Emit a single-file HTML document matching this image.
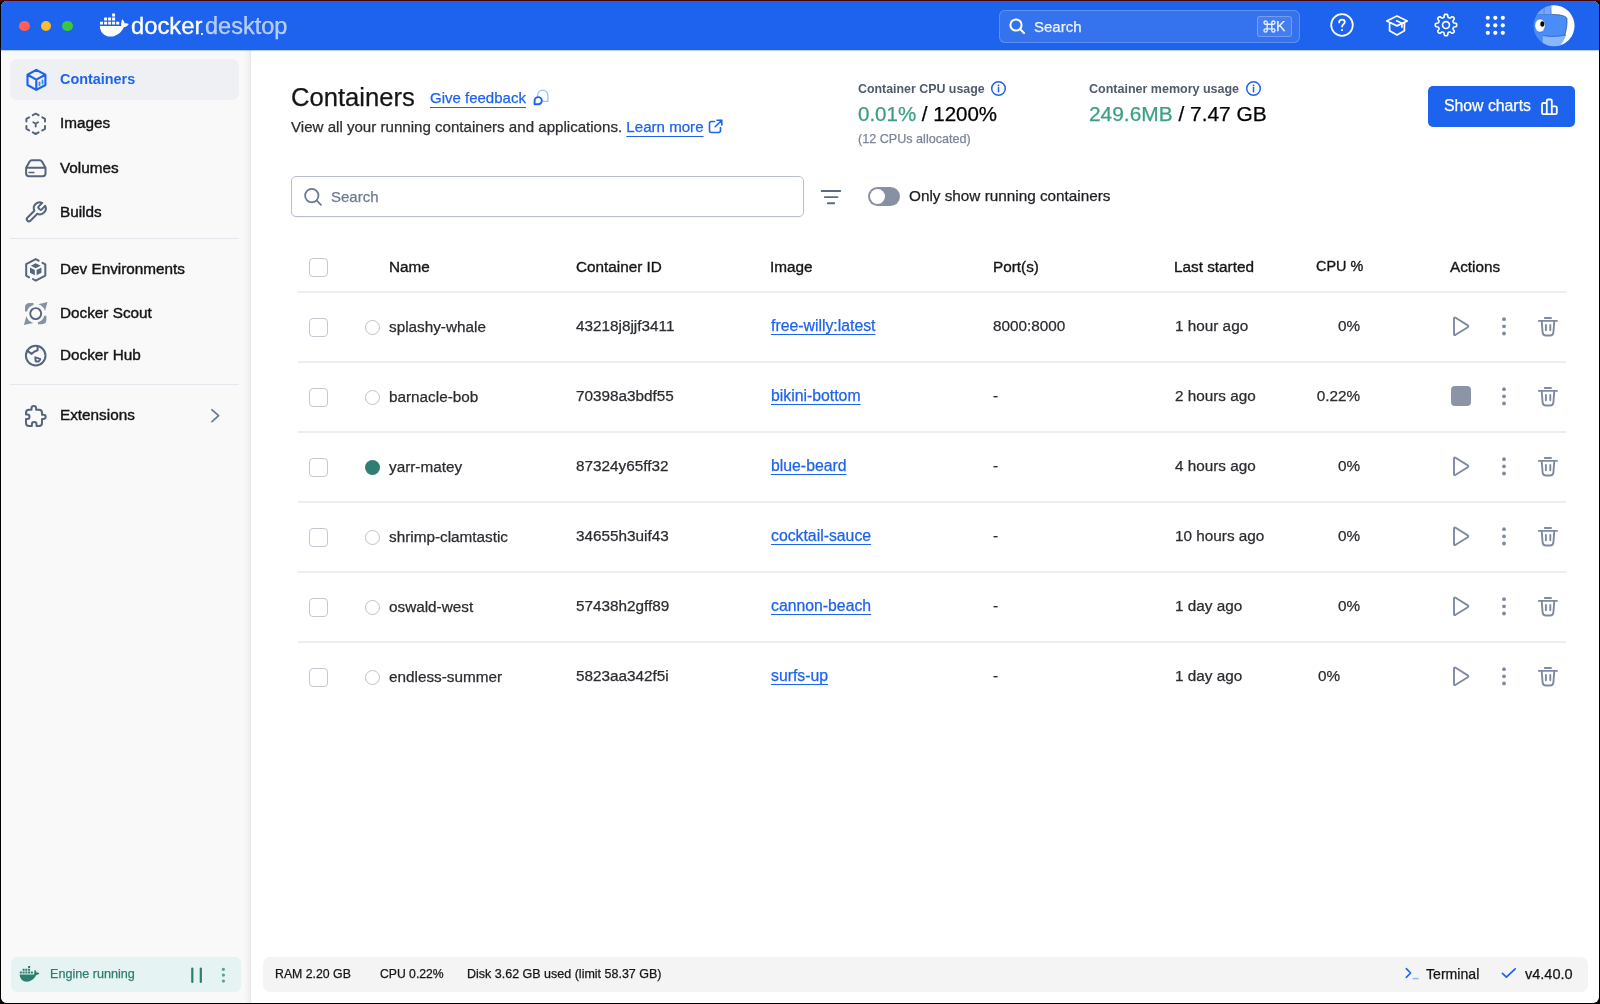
<!DOCTYPE html>
<html><head><meta charset="utf-8">
<style>
*{box-sizing:border-box;margin:0;padding:0}
html,body{width:1600px;height:1004px;overflow:hidden;background:#000;font-family:"Liberation Sans",sans-serif;position:relative;-webkit-text-stroke-width:0.25px}
#win{position:absolute;left:1px;top:1px;width:1598px;height:1002px;background:#fff;border-radius:6px;overflow:hidden}
.a{position:absolute;white-space:nowrap;will-change:transform}
svg.a{overflow:visible}
#hdr{position:absolute;left:1px;top:1px;width:1598px;height:49px;background:#1d63ed;border-radius:6px 6px 0 0}
#side{position:absolute;left:1px;top:50px;width:250px;height:953px;background:#f9f9f9;border-bottom-left-radius:6px}
#sideedge{position:absolute;left:244px;top:50px;width:7px;height:953px;background:linear-gradient(to right,rgba(0,0,0,0),rgba(0,0,0,0.035) 70%,rgba(0,0,0,0.075))}
.nav{font-size:15.3px;line-height:15px;color:#131417;-webkit-text-stroke-width:0.4px}
.tl{position:absolute;width:10.5px;height:10.5px;border-radius:50%}
.hd{font-size:15.3px;line-height:15px;color:#141518;-webkit-text-stroke-width:0.35px}
.cell{font-size:15.3px;line-height:15px;color:#2a2c30}
.lnk2{font-size:15.8px;line-height:15px;color:#1d63ed;text-decoration:underline;text-underline-offset:3px;text-decoration-thickness:1px;text-decoration-skip-ink:none}
.lnk{font-size:15px;line-height:15px;color:#1d63ed;text-decoration:underline;text-underline-offset:3.5px;text-decoration-thickness:1px;text-decoration-skip-ink:none}
.rowline{position:absolute;left:298px;width:1268px;height:2px;margin-top:-1px;background:#eceef1}
.cb{position:absolute;left:309px;width:19px;height:19px;border:1.5px solid #c3c8d3;border-radius:4px;background:#fff}
.st{position:absolute;left:365px;width:15px;height:15px;border:1.3px solid #c2c2c2;border-radius:50%}
</style></head><body>
<div id="win"></div>
<div id="hdr"></div>
<div id="side"></div>
<div id="sideedge"></div>
<div class="a" style="left:1px;top:50px;width:1598px;height:1px;background:rgba(29,99,237,0.3)"></div>
<div class="a" style="left:0;top:0;width:1600px;height:1px;background:#4a0606"></div>

<!-- traffic lights -->
<div class="tl" style="left:19px;top:20.5px;background:#fe5f57"></div>
<div class="tl" style="left:40.5px;top:20.5px;background:#febc2e"></div>
<div class="tl" style="left:62px;top:20.5px;background:#3ac83f"></div>


<!-- logo -->
<svg class="a" style="left:0;top:0" width="300" height="50" viewBox="0 0 300 50">
 <g fill="#fff">
  <rect x="112.1" y="13.6" width="3" height="3" rx="0.3"/>
  <rect x="104.1" y="17.6" width="3" height="2.9" rx="0.3"/>
  <rect x="108.1" y="17.6" width="3" height="2.9" rx="0.3"/>
  <rect x="112.1" y="17.6" width="3" height="2.9" rx="0.3"/>
  <rect x="100" y="21.7" width="3" height="2.9" rx="0.3"/>
  <rect x="104.1" y="21.7" width="3" height="2.9" rx="0.3"/>
  <rect x="108.1" y="21.7" width="3" height="2.9" rx="0.3"/>
  <rect x="112.1" y="21.7" width="3" height="2.9" rx="0.3"/>
  <rect x="116.2" y="21.7" width="3" height="2.9" rx="0.3"/>
  <path d="M99.9 26 L121.3 26 C121 24.5 121.2 21 122.3 19.3 C123.5 20.5 124.5 22 124.6 23.5 C126 23 127.5 23.3 128.8 24 C127.8 26 125.5 27.2 123.8 27.3 C121.5 33 116 36.6 110.5 36.6 C104 36.6 99.9 32 99.9 26 Z"/>
 </g>
</svg>
<div class="a" style="left:131px;top:13.6px;font-size:23.8px;line-height:23px;color:#fff;-webkit-text-stroke:0.35px #fff">docker</div>
<div class="a" style="left:200.5px;top:32.5px;width:1.5px;height:1.5px;background:#fff;border-radius:50%"></div>
<div class="a" style="left:205px;top:14.7px;font-size:23.5px;line-height:23px;color:rgba(255,255,255,0.66)">desktop</div>

<!-- header search -->
<div class="a" style="left:998.5px;top:9.5px;width:301px;height:33px;border:1px solid rgba(255,255,255,0.22);background:rgba(255,255,255,0.1);border-radius:6px"></div>
<svg class="a" style="left:1008px;top:17px" width="18" height="18" viewBox="0 0 18 18"><circle cx="8" cy="8" r="5.6" fill="none" stroke="#fff" stroke-width="2"/><path d="M12.2 12.2 L16 16" stroke="#fff" stroke-width="2" stroke-linecap="round"/></svg>
<div class="a" style="left:1034px;top:19.3px;font-size:15px;line-height:15px;color:rgba(255,255,255,0.9)">Search</div>
<div class="a" style="left:1257px;top:16px;width:35px;height:21px;border:1px solid rgba(255,255,255,0.25);background:rgba(255,255,255,0.08);border-radius:3px"></div>
<svg class="a" style="left:1263.2px;top:19.6px" width="13" height="13" viewBox="0 0 13 13"><path d="M4.2 4.2 H8.8 V8.8 H4.2 Z M4.2 4.2 V2.6 A1.6 1.6 0 1 0 2.6 4.2 H4.2 M8.8 4.2 V2.6 A1.6 1.6 0 1 1 10.4 4.2 H8.8 M8.8 8.8 V10.4 A1.6 1.6 0 1 0 10.4 8.8 H8.8 M4.2 8.8 V10.4 A1.6 1.6 0 1 1 2.6 8.8 H4.2" fill="none" stroke="rgba(255,255,255,0.88)" stroke-width="1.35"/></svg>
<div class="a" style="left:1275.6px;top:19.4px;font-size:14px;line-height:14px;color:rgba(255,255,255,0.88)">K</div>

<!-- header icons -->
<svg class="a" style="left:1329.7px;top:13.25px" width="24" height="24" viewBox="0 0 24 24"><circle cx="12" cy="12" r="10.8" fill="none" stroke="#fff" stroke-width="1.75"/><path d="M9.2 9.4 C9.2 7.7 10.5 6.7 12 6.7 C13.6 6.7 14.8 7.7 14.8 9.2 C14.8 11.1 12.1 11.3 12.1 13.6" fill="none" stroke="#fff" stroke-width="1.8" stroke-linecap="round"/><circle cx="12.05" cy="17" r="1.1" fill="#fff"/></svg>
<svg class="a" style="left:1384px;top:13.7px" width="26" height="24" viewBox="0 0 26 24"><g transform="translate(13 11.5) scale(0.95) translate(-13 -11.6)"><path d="M2.2 6.8 L13 1.6 L23.8 6.8 L13 12 Z M5.2 8.3 V17.2 L13 21.6 L20.8 17.2 V8.3" fill="none" stroke="#fff" stroke-width="1.8" stroke-linejoin="round"/><path d="M12.6 6.6 L18.2 9.2 V13.5" fill="none" stroke="#fff" stroke-width="1.7" stroke-linecap="round"/></g></svg>
<svg class="a" style="left:1434.25px;top:13.3px" width="24" height="24" viewBox="0 0 24 24"><path d="M22.70 12.00 L22.68 12.42 L22.62 12.84 L22.45 13.24 L22.00 13.58 L21.07 13.80 L20.14 13.95 L19.67 14.16 L19.46 14.42 L19.33 14.70 L19.21 14.98 L19.09 15.27 L18.99 15.56 L18.96 15.90 L19.14 16.37 L19.69 17.14 L20.19 17.95 L20.27 18.52 L20.10 18.92 L19.85 19.26 L19.57 19.57 L19.26 19.85 L18.92 20.10 L18.52 20.27 L17.95 20.19 L17.14 19.69 L16.37 19.14 L15.90 18.96 L15.56 18.99 L15.27 19.09 L14.98 19.21 L14.70 19.33 L14.42 19.46 L14.16 19.67 L13.95 20.14 L13.80 21.07 L13.58 22.00 L13.24 22.45 L12.84 22.62 L12.42 22.68 L12.00 22.70 L11.58 22.68 L11.16 22.62 L10.76 22.45 L10.42 22.00 L10.20 21.07 L10.05 20.14 L9.84 19.67 L9.58 19.46 L9.30 19.33 L9.02 19.21 L8.73 19.09 L8.44 18.99 L8.10 18.96 L7.63 19.14 L6.86 19.69 L6.05 20.19 L5.48 20.27 L5.08 20.10 L4.74 19.85 L4.43 19.57 L4.15 19.26 L3.90 18.92 L3.73 18.52 L3.81 17.95 L4.31 17.14 L4.86 16.37 L5.04 15.90 L5.01 15.56 L4.91 15.27 L4.79 14.98 L4.67 14.70 L4.54 14.42 L4.33 14.16 L3.86 13.95 L2.93 13.80 L2.00 13.58 L1.55 13.24 L1.38 12.84 L1.32 12.42 L1.30 12.00 L1.32 11.58 L1.38 11.16 L1.55 10.76 L2.00 10.42 L2.93 10.20 L3.86 10.05 L4.33 9.84 L4.54 9.58 L4.67 9.30 L4.79 9.02 L4.91 8.73 L5.01 8.44 L5.04 8.10 L4.86 7.63 L4.31 6.86 L3.81 6.05 L3.73 5.48 L3.90 5.08 L4.15 4.74 L4.43 4.43 L4.74 4.15 L5.08 3.90 L5.48 3.73 L6.05 3.81 L6.86 4.31 L7.63 4.86 L8.10 5.04 L8.44 5.01 L8.73 4.91 L9.02 4.79 L9.30 4.67 L9.58 4.54 L9.84 4.33 L10.05 3.86 L10.20 2.93 L10.42 2.00 L10.76 1.55 L11.16 1.38 L11.58 1.32 L12.00 1.30 L12.42 1.32 L12.84 1.38 L13.24 1.55 L13.58 2.00 L13.80 2.93 L13.95 3.86 L14.16 4.33 L14.42 4.54 L14.70 4.67 L14.98 4.79 L15.27 4.91 L15.56 5.01 L15.90 5.04 L16.37 4.86 L17.14 4.31 L17.95 3.81 L18.52 3.73 L18.92 3.90 L19.26 4.15 L19.57 4.43 L19.85 4.74 L20.10 5.08 L20.27 5.48 L20.19 6.05 L19.69 6.86 L19.14 7.63 L18.96 8.10 L18.99 8.44 L19.09 8.73 L19.21 9.02 L19.33 9.30 L19.46 9.58 L19.67 9.84 L20.14 10.05 L21.07 10.20 L22.00 10.42 L22.45 10.76 L22.62 11.16 L22.68 11.58 Z" fill="none" stroke="#fff" stroke-width="1.65" stroke-linejoin="round"/><circle cx="12" cy="12" r="3.45" fill="none" stroke="#fff" stroke-width="1.65"/></svg>
<svg class="a" style="left:1484px;top:14px" width="24" height="24" viewBox="0 0 24 24"><g fill="#fff"><circle cx="3.8" cy="3.8" r="2.1"/><circle cx="11.3" cy="3.8" r="2.1"/><circle cx="18.8" cy="3.8" r="2.1"/><circle cx="3.8" cy="11.3" r="2.1"/><circle cx="11.3" cy="11.3" r="2.1"/><circle cx="18.8" cy="11.3" r="2.1"/><circle cx="3.8" cy="18.8" r="2.1"/><circle cx="11.3" cy="18.8" r="2.1"/><circle cx="18.8" cy="18.8" r="2.1"/></g></svg>
<!-- avatar -->
<svg class="a" style="left:1533px;top:5px" width="42" height="42" viewBox="0 0 42 42">
 <defs><clipPath id="avc"><circle cx="21" cy="20.8" r="20.5"/></clipPath></defs>
 <g clip-path="url(#avc)">
  <rect x="0" y="0" width="42" height="42" fill="#4a8df8"/>
  <path d="M0 0 H18 L18.5 9.5 H0 Z" fill="#7aa6f6"/>
  <path d="M17.5 0 H42 V42 H25 C30.5 36 34.5 26 34 13.5 C33.2 11 28 9.5 18.5 9.5 Z" fill="#fff"/>
  <path d="M11 9.5 V2 M18 9.5 V0" stroke="#3f79dc" stroke-width="0.7"/>
  <path d="M18.5 9.5 C28 9.5 33.2 11 34 13.5 C34.5 26 30.5 36 25 42" fill="none" stroke="#23508f" stroke-width="0.7"/>
  <path d="M0 9.5 H18.5" stroke="#3f79dc" stroke-width="0.7"/>
  <path d="M10 30.5 C18 32 26 31.5 33 30 C31.5 35 29 39 25.5 42 H9.5 Z" fill="#8ab6fb"/>
  <path d="M10 30.5 C18 32 26 31.5 33 30" fill="none" stroke="#2a5fc0" stroke-width="0.8"/>
  <ellipse cx="7" cy="20.5" rx="5.2" ry="6.6" fill="#fff" stroke="#2a5fc0" stroke-width="0.5"/>
  <ellipse cx="9.3" cy="19" rx="2" ry="2.8" fill="#000"/>
 </g>
</svg>

<!-- sidebar -->
<div class="a" style="left:10px;top:59px;width:229px;height:41px;background:#eef0f4;border-radius:7px"></div>
<div class="a" style="left:10px;top:238px;width:229px;height:1px;background:#e4e7ec"></div>
<div class="a" style="left:10px;top:384px;width:229px;height:1px;background:#e4e7ec"></div>
<svg class="a" style="left:0;top:0" width="250" height="440" viewBox="0 0 250 440">
 <g fill="none" stroke="#1d63ed" stroke-width="2" stroke-linejoin="round" stroke-linecap="round">
  <path transform="translate(0.6 0.3)" d="M35.7 69.6 L44.8 74.5 L44.8 84.7 L35.7 89.6 L26.9 84.7 L26.9 74.5 Z M26.9 74.5 L35.7 79.3 L44.8 74.5 M35.7 79.3 V89.6" stroke-width="2.15"/>
 </g>
 <g stroke="#2f94f5" stroke-width="1.8" stroke-linecap="round"><path transform="translate(0.6 0.3)" d="M38.9 82 V85 M41.9 80.2 V83.2"/></g>
 <g fill="none" stroke="#56657e" stroke-width="2" stroke-linejoin="round" stroke-linecap="round">
  <!-- images dashed hex -->
  <path d="M32.8 115.2 L35.7 113.7 L38.6 115.2 M42.3 117.3 L45 118.9 L45 121.6 M45 126 L45 128.8 L42.3 130.4 M38.6 132.4 L35.7 134 L32.8 132.4 M29.1 130.4 L26.4 128.8 L26.4 126 M26.4 121.6 L26.4 118.9 L29.1 117.3"/>
  <path d="M33.3 122.3 L35.7 123.7 L38.1 122.3 M35.7 123.7 V126.5" stroke-width="1.9"/>
  <!-- volumes -->
  <path d="M26.1 167.8 L29.5 161.7 Q30.3 160.3 31.9 160.3 L39.7 160.3 Q41.3 160.3 42.1 161.7 L45.5 167.8 L45.5 173.3 Q45.5 176.2 42.6 176.2 L29 176.2 Q26.1 176.2 26.1 173.3 Z M26.1 167.8 H45.5"/>
  <path d="M29.2 172.5 H33.8" stroke-width="1.7"/>
  <!-- wrench -->
  <path transform="translate(23.8 200.3) scale(1.0)" d="M14.7 6.3a1 1 0 0 0 0 1.4l1.6 1.6a1 1 0 0 0 1.4 0l3.77-3.77a6 6 0 0 1-7.94 7.94l-6.91 6.91a2.12 2.12 0 0 1-3-3l6.91-6.91a6 6 0 0 1 7.94-7.94l-3.76 3.76z"/>
  <!-- dev env -->
  <path d="M29.1 277.3 L26.2 275.7 L26.2 264.2 L35.7 259.1 L38.6 260.7 M42.5 262.8 L45.3 264.3 L45.3 275.6 L35.7 280.6 L32.9 279"/>
  <!-- hub -->
  <circle cx="35.7" cy="355.6" r="9.8"/>
  <path d="M27.2 350.6 L31.6 353.9 C33.5 351.8 35.5 350.8 37.6 350.3 L37.6 346.2"/>
  <path d="M35.3 357.3 L40 358.8 Q40.5 359.1 40.1 359.6 L38.7 361.5 L36.2 361.5 Q35.7 361.5 35.6 361 Z" stroke-width="1.9"/>
  <!-- extensions -->
  <path d="M26 412.8 Q26 409.8 29 409.8 L31.5 409.8 L31.5 408.3 A2.3 2.3 0 0 1 36.1 408.3 L36.1 409.8 L39 409.8 Q42 409.8 42 412.8 L42 414.7 L43.6 414.7 A2.1 2.1 0 0 1 43.6 418.9 L42 418.9 L42 423 Q42 426 39 426 L36.5 426 L36.5 424.3 A2.3 2.3 0 0 0 31.9 424.3 L31.9 426 L29 426 Q26 426 26 423 L26 419 L27.3 419 A2.2 2.2 0 0 0 27.3 414.6 L26 414.6 Z"/>
  <path d="M212 409.8 L218.6 415.7 L212 421.6" stroke="#6b7a93" stroke-width="1.8"/>
 </g>
 <!-- dev env inner cube -->
 <g fill="#56657e">
  <path d="M35.7 263.3 L40.6 265.8 L35.7 268.3 L30.9 265.8 Z"/>
  <path d="M30 267.6 L34.8 270.1 L34.8 275.3 L30 272.8 Z"/>
  <path d="M36.6 270.1 L41.4 267.6 L41.4 272.8 L36.6 275.3 Z"/>
 </g>
 <!-- scout -->
 <circle cx="35.7" cy="313.6" r="5.5" fill="none" stroke="#56657e" stroke-width="1.9"/>
 <g fill="#8591a5" transform="translate(35.7 313.6)">
  <path d="M-2.2 -8.6 L-2.2 -10.6 L-6 -10.6 Q-10.7 -10.6 -10.7 -6 L-10.7 -2.2 L-8.6 -2.2 A8.9 8.9 0 0 1 -2.2 -8.6 Z"/>
  <path d="M2.5 -9.3 L11.8 -11.5 L9.3 -2.5 A9.6 9.6 0 0 0 2.5 -9.3 Z"/>
  <path d="M-2.5 9.3 L-11.8 11.5 L-9.3 2.5 A9.6 9.6 0 0 0 -2.5 9.3 Z"/>
  <path d="M2.2 8.6 L2.2 10.6 L6 10.6 Q10.7 10.6 10.7 6 L10.7 2.2 L8.6 2.2 A8.9 8.9 0 0 1 2.2 8.6 Z"/>
 </g>
</svg>
<div class="a nav" style="left:59.6px;top:71.8px;font-size:14.4px;font-weight:bold;color:#1d63ed;-webkit-text-stroke-width:0">Containers</div>
<div class="a nav" style="left:59.6px;top:115.1px">Images</div>
<div class="a nav" style="left:59.6px;top:159.6px">Volumes</div>
<div class="a nav" style="left:59.6px;top:203.9px">Builds</div>
<div class="a nav" style="left:59.6px;top:261px">Dev Environments</div>
<div class="a nav" style="left:59.6px;top:305.4px">Docker Scout</div>
<div class="a nav" style="left:59.6px;top:347px">Docker Hub</div>
<div class="a nav" style="left:59.6px;top:407.2px">Extensions</div>

<!-- main header -->
<div class="a" style="left:290.5px;top:85px;font-size:25.6px;line-height:25px;color:#141518">Containers</div>
<div class="a lnk" style="left:429.5px;top:90.2px">Give feedback</div>
<svg class="a" style="left:530px;top:87px" width="22" height="20" viewBox="0 0 22 20">
 <path d="M7.6 9.5 V8.3 A5.15 5.15 0 0 1 17.9 8.3 V14.3 H12.5" fill="none" stroke="#a3c0f8" stroke-width="1.3" stroke-linejoin="round"/>
 <path d="M4.6 17.3 V13.7 A3.6 3.6 0 1 1 8.2 17.3 Z" fill="#fff" stroke="#1d63ed" stroke-width="1.9" stroke-linejoin="round"/>
</svg>
<div class="a" style="left:291px;top:119px;font-size:15.1px;line-height:15px;color:#2c2e33">View all your running containers and applications. <span class="lnk" style="font-size:15.1px">Learn more</span></div>
<svg class="a" style="left:707px;top:118px" width="17" height="17" viewBox="0 0 17 17">
 <path d="M7.5 3.5 H4.5 Q2.5 3.5 2.5 5.5 V12.5 Q2.5 14.5 4.5 14.5 H11.5 Q13.5 14.5 13.5 12.5 V9.5" fill="none" stroke="#1d63ed" stroke-width="1.6" stroke-linecap="round"/>
 <path d="M10 2.2 H14.8 V7 M14.8 2.2 L8.2 8.8" fill="none" stroke="#1d63ed" stroke-width="1.6" stroke-linecap="round" stroke-linejoin="round"/>
</svg>

<div class="a" style="left:857.5px;top:83.4px;font-size:12.4px;line-height:12px;font-weight:bold;color:#4f5a6b;-webkit-text-stroke-width:0">Container CPU usage</div>
<svg class="a" style="left:990px;top:80px" width="17" height="17" viewBox="0 0 17 17"><circle cx="8.5" cy="8.5" r="6.8" fill="none" stroke="#1d63ed" stroke-width="1.5"/><circle cx="8.5" cy="5.4" r="0.95" fill="#1d63ed"/><path d="M8.5 7.6 V11.8" stroke="#1d63ed" stroke-width="1.5" stroke-linecap="round"/></svg>
<div class="a" style="left:857.5px;top:104.2px;font-size:20.5px;line-height:20px;color:#000"><span style="color:#3a9e84">0.01%</span> / 1200%</div>
<div class="a" style="left:857.5px;top:132.6px;font-size:12.6px;line-height:12px;color:#7b8596">(12 CPUs allocated)</div>

<div class="a" style="left:1089px;top:83.4px;font-size:12.5px;line-height:12px;font-weight:bold;color:#4f5a6b;-webkit-text-stroke-width:0">Container memory usage</div>
<svg class="a" style="left:1245px;top:80px" width="17" height="17" viewBox="0 0 17 17"><circle cx="8.5" cy="8.5" r="6.8" fill="none" stroke="#1d63ed" stroke-width="1.5"/><circle cx="8.5" cy="5.4" r="0.95" fill="#1d63ed"/><path d="M8.5 7.6 V11.8" stroke="#1d63ed" stroke-width="1.5" stroke-linecap="round"/></svg>
<div class="a" style="left:1089px;top:104.4px;font-size:20.9px;line-height:20px;color:#000"><span style="color:#3a9e84">249.6MB</span> / 7.47 GB</div>

<div class="a" style="left:1428px;top:86px;width:147px;height:41px;background:#1d63ed;border-radius:5px"></div>
<div class="a" style="left:1444px;top:97.8px;font-size:15.8px;line-height:15px;color:#fff">Show charts</div>
<svg class="a" style="left:1539px;top:96px" width="21" height="21" viewBox="0 0 21 21"><path d="M4.2 18.2 Q3 18.2 3 17 V8.2 Q3 7 4.2 7 H7.8 V4.7 Q7.8 3.5 9 3.5 H11.6 Q12.8 3.5 12.8 4.7 V10.3 H16.6 Q17.8 10.3 17.8 11.5 V17 Q17.8 18.2 16.6 18.2 Z M7.8 7 V18.2 M12.8 10.3 V18.2" fill="none" stroke="#fff" stroke-width="1.8" stroke-linejoin="round"/></svg>

<!-- search -->
<div class="a" style="left:291px;top:176px;width:513px;height:41px;border:1.3px solid #b9c0cb;border-radius:5px;background:#fff;box-shadow:0 1px 0 rgba(0,0,0,0.04)"></div>
<svg class="a" style="left:302px;top:186px" width="22" height="22" viewBox="0 0 22 22"><circle cx="9.8" cy="9.6" r="6.7" fill="none" stroke="#6c7a90" stroke-width="1.8"/><path d="M14.6 14.4 L19 18.8" stroke="#6c7a90" stroke-width="1.8" stroke-linecap="round"/></svg>
<div class="a" style="left:331px;top:188.8px;font-size:15px;line-height:15px;color:#6f7a8c">Search</div>
<svg class="a" style="left:819px;top:186.7px" width="24" height="20" viewBox="0 0 24 20"><path d="M2.7 4 H21.3 M5.8 10.1 H18.5 M8.8 16.2 H15.2" stroke="#5d6a82" stroke-width="1.9" stroke-linecap="round"/></svg>
<div class="a" style="left:867.5px;top:186.5px;width:32px;height:19px;border-radius:10px;background:#8891a4"></div>
<div class="a" style="left:869.5px;top:188.5px;width:15px;height:15px;border-radius:50%;background:#fff"></div>
<div class="a" style="left:908.5px;top:187.8px;font-size:15.3px;line-height:15px;color:#1c1e22">Only show running containers</div>

<!-- table -->
<div class="cb" style="top:258px"></div>
<div class="a hd" style="left:389px;top:258.7px">Name</div>
<div class="a hd" style="left:576px;top:258.7px">Container ID</div>
<div class="a hd" style="left:769.6px;top:258.7px">Image</div>
<div class="a hd" style="left:993px;top:258.7px">Port(s)</div>
<div class="a hd" style="left:1173.5px;top:258.7px">Last started</div>
<div class="a hd" style="left:1316px;top:258.9px;font-size:14.4px">CPU %</div>
<div class="a hd" style="left:1449.5px;top:258.7px">Actions</div>
<div class="rowline" style="top:292px"></div>
<div class="cb" style="top:318px"></div>
<div class="st" style="top:319.5px"></div>
<div class="a cell" style="left:388.5px;top:318.6px">splashy-whale</div>
<div class="a cell" style="left:576px;top:317.5px">43218j8jjf3411</div>
<div class="a lnk2" style="left:770.5px;top:317.5px">free-willy:latest</div>
<div class="a cell" style="left:992.5px;top:317.5px">8000:8000</div>
<div class="a cell" style="left:1174.5px;top:317.5px">1 hour ago</div>
<div class="a cell" style="left:1260px;width:100px;text-align:right;top:317.5px">0%</div>
<svg class="a" style="left:1450px;top:314px" width="24" height="24" viewBox="0 0 24 24"><path d="M4 4.6 Q4 2.8 5.6 3.8 L17.8 11.4 Q18.9 12.3 17.8 13.2 L5.6 20.8 Q4 21.8 4 20 Z" fill="none" stroke="#7d8aa0" stroke-width="1.9" stroke-linejoin="round"/></svg>
<svg class="a" style="left:1492px;top:313px" width="24" height="24" viewBox="0 0 24 24"><g fill="#7d8aa0"><circle cx="12" cy="6.2" r="1.9"/><circle cx="12" cy="13.3" r="1.9"/><circle cx="12" cy="20.5" r="1.9"/></g></svg>
<svg class="a" style="left:1534.7px;top:314px" width="24" height="24" viewBox="0 0 24 24"><path d="M3.8 6.9 H22 M9.8 4 H16 M6.7 7 L7.6 18.4 Q7.9 21.5 11 21.5 H15 Q18.1 21.5 18.4 18.4 L19.3 7 M10.9 11 V16.2 M15.3 11 V16.2" fill="none" stroke="#7d8aa0" stroke-width="1.9" stroke-linecap="round" stroke-linejoin="round"/></svg>
<div class="rowline" style="top:362px"></div>
<div class="cb" style="top:388px"></div>
<div class="st" style="top:389.5px"></div>
<div class="a cell" style="left:388.5px;top:388.6px">barnacle-bob</div>
<div class="a cell" style="left:576px;top:387.5px">70398a3bdf55</div>
<div class="a lnk2" style="left:770.5px;top:387.5px">bikini-bottom</div>
<div class="a cell" style="left:992.5px;top:387.5px">-</div>
<div class="a cell" style="left:1174.5px;top:387.5px">2 hours ago</div>
<div class="a cell" style="left:1260px;width:100px;text-align:right;top:387.5px">0.22%</div>
<div class="a" style="left:1451.2px;top:386.4px;width:20.2px;height:20.3px;border-radius:4px;background:#8b95a7"></div>
<svg class="a" style="left:1492px;top:383px" width="24" height="24" viewBox="0 0 24 24"><g fill="#7d8aa0"><circle cx="12" cy="6.2" r="1.9"/><circle cx="12" cy="13.3" r="1.9"/><circle cx="12" cy="20.5" r="1.9"/></g></svg>
<svg class="a" style="left:1534.7px;top:384px" width="24" height="24" viewBox="0 0 24 24"><path d="M3.8 6.9 H22 M9.8 4 H16 M6.7 7 L7.6 18.4 Q7.9 21.5 11 21.5 H15 Q18.1 21.5 18.4 18.4 L19.3 7 M10.9 11 V16.2 M15.3 11 V16.2" fill="none" stroke="#7d8aa0" stroke-width="1.9" stroke-linecap="round" stroke-linejoin="round"/></svg>
<div class="rowline" style="top:432px"></div>
<div class="cb" style="top:458px"></div>
<div class="a" style="left:365px;top:459.5px;width:15px;height:15px;border-radius:50%;background:#2e7f72"></div>
<div class="a cell" style="left:388.5px;top:458.6px">yarr-matey</div>
<div class="a cell" style="left:576px;top:457.5px">87324y65ff32</div>
<div class="a lnk2" style="left:770.5px;top:457.5px">blue-beard</div>
<div class="a cell" style="left:992.5px;top:457.5px">-</div>
<div class="a cell" style="left:1174.5px;top:457.5px">4 hours ago</div>
<div class="a cell" style="left:1260px;width:100px;text-align:right;top:457.5px">0%</div>
<svg class="a" style="left:1450px;top:454px" width="24" height="24" viewBox="0 0 24 24"><path d="M4 4.6 Q4 2.8 5.6 3.8 L17.8 11.4 Q18.9 12.3 17.8 13.2 L5.6 20.8 Q4 21.8 4 20 Z" fill="none" stroke="#7d8aa0" stroke-width="1.9" stroke-linejoin="round"/></svg>
<svg class="a" style="left:1492px;top:453px" width="24" height="24" viewBox="0 0 24 24"><g fill="#7d8aa0"><circle cx="12" cy="6.2" r="1.9"/><circle cx="12" cy="13.3" r="1.9"/><circle cx="12" cy="20.5" r="1.9"/></g></svg>
<svg class="a" style="left:1534.7px;top:454px" width="24" height="24" viewBox="0 0 24 24"><path d="M3.8 6.9 H22 M9.8 4 H16 M6.7 7 L7.6 18.4 Q7.9 21.5 11 21.5 H15 Q18.1 21.5 18.4 18.4 L19.3 7 M10.9 11 V16.2 M15.3 11 V16.2" fill="none" stroke="#7d8aa0" stroke-width="1.9" stroke-linecap="round" stroke-linejoin="round"/></svg>
<div class="rowline" style="top:502px"></div>
<div class="cb" style="top:528px"></div>
<div class="st" style="top:529.5px"></div>
<div class="a cell" style="left:388.5px;top:528.6px">shrimp-clamtastic</div>
<div class="a cell" style="left:576px;top:527.5px">34655h3uif43</div>
<div class="a lnk2" style="left:770.5px;top:527.5px">cocktail-sauce</div>
<div class="a cell" style="left:992.5px;top:527.5px">-</div>
<div class="a cell" style="left:1174.5px;top:527.5px">10 hours ago</div>
<div class="a cell" style="left:1260px;width:100px;text-align:right;top:527.5px">0%</div>
<svg class="a" style="left:1450px;top:524px" width="24" height="24" viewBox="0 0 24 24"><path d="M4 4.6 Q4 2.8 5.6 3.8 L17.8 11.4 Q18.9 12.3 17.8 13.2 L5.6 20.8 Q4 21.8 4 20 Z" fill="none" stroke="#7d8aa0" stroke-width="1.9" stroke-linejoin="round"/></svg>
<svg class="a" style="left:1492px;top:523px" width="24" height="24" viewBox="0 0 24 24"><g fill="#7d8aa0"><circle cx="12" cy="6.2" r="1.9"/><circle cx="12" cy="13.3" r="1.9"/><circle cx="12" cy="20.5" r="1.9"/></g></svg>
<svg class="a" style="left:1534.7px;top:524px" width="24" height="24" viewBox="0 0 24 24"><path d="M3.8 6.9 H22 M9.8 4 H16 M6.7 7 L7.6 18.4 Q7.9 21.5 11 21.5 H15 Q18.1 21.5 18.4 18.4 L19.3 7 M10.9 11 V16.2 M15.3 11 V16.2" fill="none" stroke="#7d8aa0" stroke-width="1.9" stroke-linecap="round" stroke-linejoin="round"/></svg>
<div class="rowline" style="top:572px"></div>
<div class="cb" style="top:598px"></div>
<div class="st" style="top:599.5px"></div>
<div class="a cell" style="left:388.5px;top:598.6px">oswald-west</div>
<div class="a cell" style="left:576px;top:597.5px">57438h2gff89</div>
<div class="a lnk2" style="left:770.5px;top:597.5px">cannon-beach</div>
<div class="a cell" style="left:992.5px;top:597.5px">-</div>
<div class="a cell" style="left:1174.5px;top:597.5px">1 day ago</div>
<div class="a cell" style="left:1260px;width:100px;text-align:right;top:597.5px">0%</div>
<svg class="a" style="left:1450px;top:594px" width="24" height="24" viewBox="0 0 24 24"><path d="M4 4.6 Q4 2.8 5.6 3.8 L17.8 11.4 Q18.9 12.3 17.8 13.2 L5.6 20.8 Q4 21.8 4 20 Z" fill="none" stroke="#7d8aa0" stroke-width="1.9" stroke-linejoin="round"/></svg>
<svg class="a" style="left:1492px;top:593px" width="24" height="24" viewBox="0 0 24 24"><g fill="#7d8aa0"><circle cx="12" cy="6.2" r="1.9"/><circle cx="12" cy="13.3" r="1.9"/><circle cx="12" cy="20.5" r="1.9"/></g></svg>
<svg class="a" style="left:1534.7px;top:594px" width="24" height="24" viewBox="0 0 24 24"><path d="M3.8 6.9 H22 M9.8 4 H16 M6.7 7 L7.6 18.4 Q7.9 21.5 11 21.5 H15 Q18.1 21.5 18.4 18.4 L19.3 7 M10.9 11 V16.2 M15.3 11 V16.2" fill="none" stroke="#7d8aa0" stroke-width="1.9" stroke-linecap="round" stroke-linejoin="round"/></svg>
<div class="rowline" style="top:642px"></div>
<div class="cb" style="top:668px"></div>
<div class="st" style="top:669.5px"></div>
<div class="a cell" style="left:388.5px;top:668.6px">endless-summer</div>
<div class="a cell" style="left:576px;top:667.5px">5823aa342f5i</div>
<div class="a lnk2" style="left:770.5px;top:667.5px">surfs-up</div>
<div class="a cell" style="left:992.5px;top:667.5px">-</div>
<div class="a cell" style="left:1174.5px;top:667.5px">1 day ago</div>
<div class="a cell" style="left:1318px;top:667.5px">0%</div>
<svg class="a" style="left:1450px;top:664px" width="24" height="24" viewBox="0 0 24 24"><path d="M4 4.6 Q4 2.8 5.6 3.8 L17.8 11.4 Q18.9 12.3 17.8 13.2 L5.6 20.8 Q4 21.8 4 20 Z" fill="none" stroke="#7d8aa0" stroke-width="1.9" stroke-linejoin="round"/></svg>
<svg class="a" style="left:1492px;top:663px" width="24" height="24" viewBox="0 0 24 24"><g fill="#7d8aa0"><circle cx="12" cy="6.2" r="1.9"/><circle cx="12" cy="13.3" r="1.9"/><circle cx="12" cy="20.5" r="1.9"/></g></svg>
<svg class="a" style="left:1534.7px;top:664px" width="24" height="24" viewBox="0 0 24 24"><path d="M3.8 6.9 H22 M9.8 4 H16 M6.7 7 L7.6 18.4 Q7.9 21.5 11 21.5 H15 Q18.1 21.5 18.4 18.4 L19.3 7 M10.9 11 V16.2 M15.3 11 V16.2" fill="none" stroke="#7d8aa0" stroke-width="1.9" stroke-linecap="round" stroke-linejoin="round"/></svg>

<!-- footer -->
<div class="a" style="left:10.5px;top:956.5px;width:229.5px;height:35px;background:#e5f4f3;border-radius:6px"></div>
<svg class="a" style="left:0;top:950px" width="250" height="50" viewBox="0 950 250 50">
 <g fill="#2e7d6f" transform="translate(-48.2 956.75) scale(0.68)">
  <rect x="112.1" y="13.6" width="3" height="3" rx="0.3"/>
  <rect x="104.1" y="17.6" width="3" height="2.9" rx="0.3"/>
  <rect x="108.1" y="17.6" width="3" height="2.9" rx="0.3"/>
  <rect x="112.1" y="17.6" width="3" height="2.9" rx="0.3"/>
  <rect x="100" y="21.7" width="3" height="2.9" rx="0.3"/>
  <rect x="104.1" y="21.7" width="3" height="2.9" rx="0.3"/>
  <rect x="108.1" y="21.7" width="3" height="2.9" rx="0.3"/>
  <rect x="112.1" y="21.7" width="3" height="2.9" rx="0.3"/>
  <rect x="116.2" y="21.7" width="3" height="2.9" rx="0.3"/>
  <path d="M99.9 26 L121.3 26 C121 24.5 121.2 21 122.3 19.3 C123.5 20.5 124.5 22 124.6 23.5 C126 23 127.5 23.3 128.8 24 C127.8 26 125.5 27.2 123.8 27.3 C121.5 33 116 36.6 110.5 36.6 C104 36.6 99.9 32 99.9 26 Z"/>
 </g>
 <path d="M192.3 968.5 V982 M200.8 968.5 V982" stroke="#2e7d6f" stroke-width="2.2" stroke-linecap="round"/>
 <g fill="#5c9e93"><circle cx="223.4" cy="969.3" r="1.6"/><circle cx="223.4" cy="975.1" r="1.6"/><circle cx="223.4" cy="981" r="1.6"/></g>
</svg>
<div class="a" style="left:50px;top:968.3px;font-size:12.6px;line-height:12px;color:#2e7d6f">Engine running</div>

<div class="a" style="left:262.5px;top:956.5px;width:1325px;height:35px;background:#f4f4f4;border-radius:7px"></div>
<div class="a" style="left:275px;top:967.6px;font-size:12.3px;line-height:12px;color:#141518">RAM 2.20 GB</div>
<div class="a" style="left:379.5px;top:967.6px;font-size:12.2px;line-height:12px;color:#141518">CPU 0.22%</div>
<div class="a" style="left:467.3px;top:967.6px;font-size:12.5px;line-height:12px;color:#141518">Disk 3.62 GB used (limit 58.37 GB)</div>
<svg class="a" style="left:1403px;top:965px" width="20" height="18" viewBox="0 0 20 18"><path d="M3.3 3.6 L7.6 8 L3.3 12.4" fill="none" stroke="#1d63ed" stroke-width="1.6" stroke-linecap="round" stroke-linejoin="round"/><path d="M9.6 13.6 H15.6" stroke="#8fb4f6" stroke-width="1.5"/></svg>
<div class="a" style="left:1425.5px;top:967.8px;font-size:14.1px;line-height:13px;color:#141518">Terminal</div>
<svg class="a" style="left:1500px;top:966px" width="18" height="14" viewBox="0 0 18 14"><path d="M2.4 7.4 L6.4 11.2 L15.2 2.8" fill="none" stroke="#1d63ed" stroke-width="1.7" stroke-linecap="round" stroke-linejoin="round"/></svg>
<div class="a" style="left:1525px;top:967.8px;font-size:14.5px;line-height:13px;color:#141518">v4.40.0</div>
</body></html>
